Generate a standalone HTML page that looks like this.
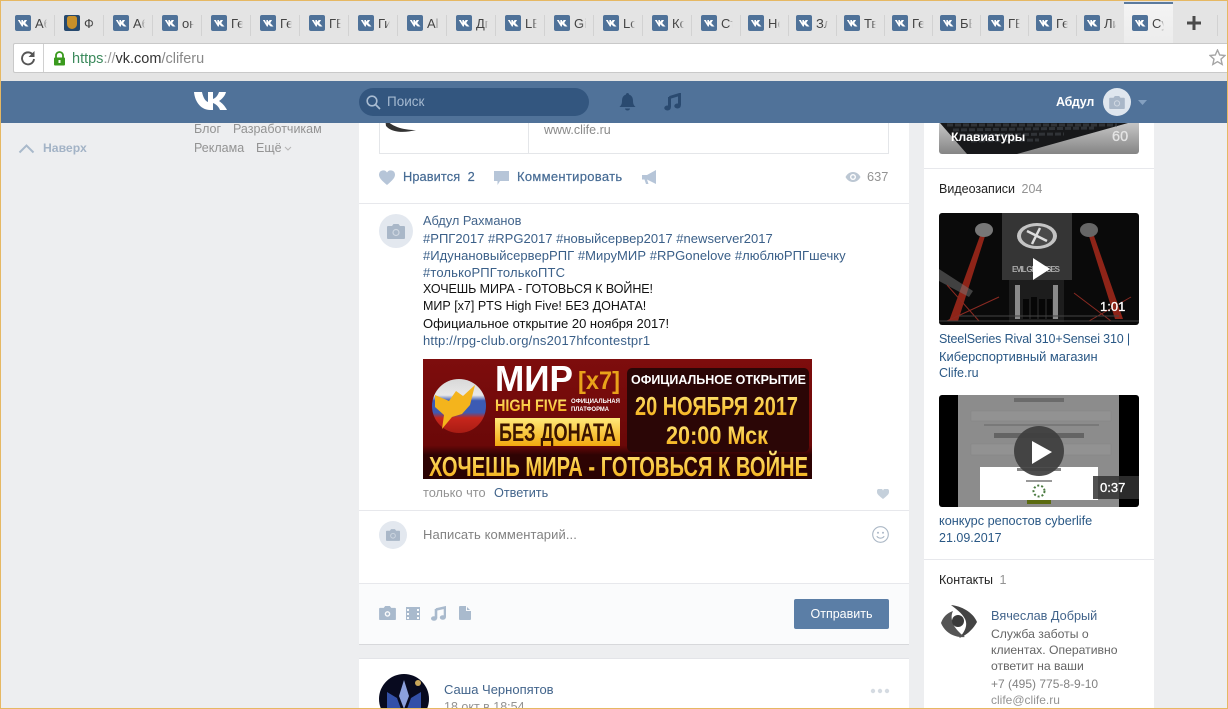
<!DOCTYPE html>
<html lang="ru"><head><meta charset="utf-8"><title>VK</title>
<style>
html,body{margin:0;padding:0;width:1228px;height:709px;overflow:hidden;background:#edeef0}
body{position:relative;font-family:"Liberation Sans","Noto Sans CJK SC",sans-serif;font-size:12.5px;color:#000}
.a{position:absolute;white-space:nowrap}
.b{position:absolute}
.i{position:absolute;top:15px;width:16px;height:16px;background:#4f7299;border-radius:2px;overflow:hidden}
.i:after{content:"";position:absolute;left:2.5px;top:4.5px;width:11px;height:7px;background:#fff;clip-path:polygon(0 0,20% 0,35% 50%,35% 0,50% 0,50% 33%,70% 0,90% 0,70% 50%,100% 100%,75% 100%,50% 67%,50% 100%,40% 100%)}
.t{position:absolute;top:16px;font-size:13px;line-height:16px;color:#444;width:12px;overflow:hidden;white-space:nowrap;-webkit-mask-image:linear-gradient(90deg,#000 65%,transparent);mask-image:linear-gradient(90deg,#000 65%,transparent)}
.s{position:absolute;top:15px;width:1px;height:21px;background:#d2d2d2}
.l{color:#3a5f88}
.g{color:#939393}
.n{color:#42648b;font-weight:normal}
.p{font-size:13px;line-height:17px;color:#111}
</style></head><body>

<!-- browser chrome -->
<div class="b" style="left:0;top:0;width:1228px;height:81px;background:#e4e4e4"></div>
<div class="b" style="left:1124px;top:2px;width:49px;height:41px;background:linear-gradient(#f4f4f4,#ececec);border-top:2px solid #5b7a9d;box-sizing:border-box"></div>

<div class="i" style="left:15px"></div><div class="t" style="left:35px">Аб</div><div class="s" style="left:54px"></div>
<div class="b" style="left:64px;top:15px;width:16px;height:16px;background:#26496e;border-radius:2px"><div class="b" style="left:3px;top:1px;width:10px;height:13px;background:#c8902a;border-radius:3px 3px 6px 6px"></div></div><div class="t" style="left:84px">Ф</div><div class="s" style="left:103px"></div>
<div class="i" style="left:113px"></div><div class="t" style="left:133px">Аб</div><div class="s" style="left:152px"></div>
<div class="i" style="left:162px"></div><div class="t" style="left:182px">он</div><div class="s" style="left:201px"></div>
<div class="i" style="left:211px"></div><div class="t" style="left:231px">Ге</div><div class="s" style="left:250px"></div>
<div class="i" style="left:260px"></div><div class="t" style="left:280px">Ге</div><div class="s" style="left:299px"></div>
<div class="i" style="left:309px"></div><div class="t" style="left:329px">ГЕ</div><div class="s" style="left:348px"></div>
<div class="i" style="left:358px"></div><div class="t" style="left:378px">Ги</div><div class="s" style="left:397px"></div>
<div class="i" style="left:407px"></div><div class="t" style="left:427px">Al</div><div class="s" style="left:446px"></div>
<div class="i" style="left:456px"></div><div class="t" style="left:476px">Дг</div><div class="s" style="left:495px"></div>
<div class="i" style="left:505px"></div><div class="t" style="left:525px">LE</div><div class="s" style="left:544px"></div>
<div class="i" style="left:554px"></div><div class="t" style="left:574px">Gi</div><div class="s" style="left:593px"></div>
<div class="i" style="left:603px"></div><div class="t" style="left:623px">Lc</div><div class="s" style="left:642px"></div>
<div class="i" style="left:652px"></div><div class="t" style="left:672px">Кс</div><div class="s" style="left:691px"></div>
<div class="i" style="left:701px"></div><div class="t" style="left:721px">Ст</div><div class="s" style="left:740px"></div>
<div class="i" style="left:748px"></div><div class="t" style="left:768px">Не</div><div class="s" style="left:788px"></div>
<div class="i" style="left:796px"></div><div class="t" style="left:816px">Зл</div><div class="s" style="left:836px"></div>
<div class="i" style="left:844px"></div><div class="t" style="left:864px">Тв</div><div class="s" style="left:884px"></div>
<div class="i" style="left:892px"></div><div class="t" style="left:912px">Ге</div><div class="s" style="left:932px"></div>
<div class="i" style="left:940px"></div><div class="t" style="left:960px">БЕ</div><div class="s" style="left:980px"></div>
<div class="i" style="left:988px"></div><div class="t" style="left:1008px">ГЕ</div><div class="s" style="left:1028px"></div>
<div class="i" style="left:1036px"></div><div class="t" style="left:1056px">Ге</div><div class="s" style="left:1076px"></div>
<div class="i" style="left:1084px"></div><div class="t" style="left:1104px">Ли</div>
<div class="i" style="left:1132px"></div><div class="t" style="left:1152px">Су</div>
<div class="s" style="left:1217px"></div>
<svg class="b" style="left:1187px;top:16px" width="14" height="14"><path d="M5.5 0h3v5.500H14v3H8.500V14h-3V8.500H0v-3h5.500z" fill="#4a4a4a"/></svg>

<!-- address bar -->
<div class="b" style="left:13px;top:43px;width:1215px;height:30px;background:#fff;border:1px solid #c9c9c9;border-right:0;border-radius:2px 0 0 2px;box-sizing:border-box"></div>
<div class="b" style="left:43px;top:44px;width:1px;height:28px;background:#d0d0d0"></div>
<svg class="b" style="left:20px;top:50px" width="16" height="16" viewBox="0 0 16 16"><path d="M13 5A6 6 0 1 0 14 9" fill="none" stroke="#555" stroke-width="1.900"/><path d="M14.500 1v6h-6z" fill="#555"/></svg>
<svg class="b" style="left:53px;top:51px" width="13" height="15" viewBox="0 0 13 15"><path d="M3 7V4.500a3.500 3.500 0 0 1 7 0V7" fill="none" stroke="#3a9a1e" stroke-width="1.800"/><rect x="1" y="6.500" width="11" height="8" rx="1" fill="#3a9a1e"/><rect x="5.500" y="9" width="2" height="3" fill="#fff"/></svg>
<div class="a" style="left:72px;top:51px;font-size:14.500px;line-height:17px"><span style="color:#3b8a5c">https</span><span style="color:#999">://</span><span style="color:#333">vk.com</span><span style="color:#888">/cliferu</span></div>
<svg class="b" style="left:1209px;top:49px" width="17" height="17" viewBox="0 0 17 17"><path d="M8.500 1l2.200 5 5.300.5-4 3.600 1.200 5.400-4.700-2.800-4.700 2.800 1.200-5.400-4-3.600 5.300-.5z" fill="none" stroke="#a5a5a5" stroke-width="1.400"/></svg>

<!-- left column -->
<svg class="b" style="left:18px;top:143px" width="17" height="11"><path d="M1.500 9.500L8.500 2.500l7 7" fill="none" stroke="#a9b9cb" stroke-width="2"/></svg>
<div class="a" style="left:43px;top:140px;font-weight:bold;font-size:12.200px;line-height:16px;color:#a3b3c6">Наверх</div>
<div class="a g" style="left:194px;top:121px;line-height:16px;color:#939393">Блог</div>
<div class="a g" style="left:233px;top:121px;line-height:16px;color:#939393">Разработчикам</div>
<div class="a g" style="left:194px;top:140px;line-height:16px;color:#939393">Реклама</div>
<div class="a g" style="left:256px;top:140px;line-height:16px;color:#939393">Ещё</div>
<svg class="b" style="left:284px;top:146px" width="8" height="6"><path d="M1 1l3 3 3-3" fill="none" stroke="#b5b5b5" stroke-width="1"/></svg>

<!-- main card -->
<div class="b" style="left:359px;top:100px;width:550px;height:544px;background:#fff;box-shadow:0 1px 0 #d7d8db"></div>

<!-- link preview -->
<div class="b" style="left:379px;top:100px;width:510px;height:54px;border:1px solid #e4e6e9;box-sizing:border-box"></div>
<div class="b" style="left:528px;top:100px;width:1px;height:54px;background:#e4e6e9"></div>
<svg class="b" style="left:380px;top:112px" width="50" height="22"><path d="M5 6C10 14 22 18 36 18 25 21 12 21 6 14z" fill="#333"/></svg>
<div class="a" style="left:544px;top:122px;line-height:16px;color:#8a8a8a">www.clife.ru</div>

<!-- actions -->
<svg class="b" style="left:378px;top:169px" width="18" height="17" viewBox="0 0 18 17"><path d="M9 16C3 11 1 8.500 1 5.500A4.300 4.300 0 0 1 9 3.500 4.300 4.300 0 0 1 17 5.500C17 8.500 15 11 9 16z" fill="#b6c5d8"/></svg>
<div class="a" style="left:403px;top:169px;font-size:12.800px;line-height:16px;color:#466b94;letter-spacing:.1px;-webkit-text-stroke:.2px #466b94">Нравится&nbsp; 2</div>
<svg class="b" style="left:494px;top:171px" width="16" height="15"><path d="M0 0h15v10H6l-2.500 4V10H0z" fill="#b6c5d8"/></svg>
<div class="a" style="left:517px;top:169px;font-size:13px;line-height:16px;color:#466b94;letter-spacing:.3px;-webkit-text-stroke:.2px #466b94">Комментировать</div>
<svg class="b" style="left:642px;top:170px" width="16" height="15"><path d="M0 5h5L14 0v14L5 9.500 6.500 14H4L2.500 9.500H0z" fill="#b6c5d8"/></svg>
<svg class="b" style="left:845px;top:171px" width="16" height="12" viewBox="0 0 16 12"><path d="M8 1C4 1 1.500 4 .5 6 1.500 8 4 11 8 11s6.500-3 7.500-5C14.500 4 12 1 8 1z" fill="#bcc7d3"/><circle cx="8" cy="6" r="3" fill="#fff"/><circle cx="8" cy="6" r="1.600" fill="#bcc7d3"/></svg>
<div class="a" style="left:867px;top:169px;font-size:12.800px;line-height:16px;color:#939393">637</div>
<div class="b" style="left:359px;top:203px;width:550px;height:1px;background:#e7e8ec"></div>

<!-- comment -->
<div class="b" style="left:379px;top:214px;width:34px;height:34px;border-radius:50%;background:#e3e8ef"></div>
<svg class="b" style="left:387px;top:224px" width="18" height="15" viewBox="0 0 18 15"><path d="M1 2h4l1.500-2h5L13 2h4a1 1 0 0 1 1 1v11a1 1 0 0 1-1 1H1a1 1 0 0 1-1-1V3a1 1 0 0 1 1-1z" fill="#a9b7c8"/><circle cx="9" cy="8.500" r="3" fill="none" stroke="#cfd7e1" stroke-width="1.200"/></svg>
<div class="a n" style="left:423px;top:212px;font-size:12.800px;line-height:17px">Абдул Рахманов</div>
<div class="a p" style="left:423px;top:230px;letter-spacing:.02px"><span class="l">#РПГ2017 #RPG2017 #новыйсервер2017 #newserver2017</span></div>
<div class="a p" style="left:423px;top:247px;letter-spacing:.05px"><span class="l">#ИдунановыйсерверРПГ #МируМИР #RPGonelove #люблюРПГшечку</span></div>
<div class="a p" style="left:423px;top:264px;letter-spacing:.15px"><span class="l">#толькоРПГтолькоПТС</span></div>
<div class="a p" style="left:423px;top:281px;font-size:12.500px;letter-spacing:-.07px">ХОЧЕШЬ МИРА - ГОТОВЬСЯ К ВОЙНЕ!</div>
<div class="a p" style="left:423px;top:298px;font-size:12.500px">МИР [x7] PTS High Five! БЕЗ ДОНАТА!</div>
<div class="a p" style="left:423px;top:315px">Официальное открытие 20 ноября 2017!</div>
<div class="a p" style="left:423px;top:332px;letter-spacing:.2px"><span class="l">http://rpg-club.org/ns2017hfcontestpr1</span></div>

<!-- banner -->
<svg class="b" style="left:423px;top:359px" width="389" height="120" viewBox="0 0 389 120">
<defs>
<linearGradient id="gy" x1="0" y1="0" x2="0" y2="1"><stop offset="0" stop-color="#ffe97a"/><stop offset="1" stop-color="#f3a90f"/></linearGradient>
<linearGradient id="sp" x1="0" y1="0" x2="0" y2="1"><stop offset="0" stop-color="#d8d8d8"/><stop offset=".3" stop-color="#e8e8e8"/><stop offset=".4" stop-color="#3c5bb4"/><stop offset=".62" stop-color="#3c5bb4"/><stop offset=".72" stop-color="#c8261c"/><stop offset="1" stop-color="#a81c14"/></linearGradient>
<linearGradient id="bg" x1="0" y1="0" x2="0" y2="1"><stop offset="0" stop-color="#7e0d0d"/><stop offset=".72" stop-color="#6a0808"/><stop offset=".8" stop-color="#2e0303"/><stop offset="1" stop-color="#2a0303"/></linearGradient>
</defs>
<rect width="389" height="120" fill="url(#bg)"/>
<rect x="204" y="9" width="182" height="84" rx="5" fill="#2b0606"/>
<circle cx="36" cy="47" r="27" fill="url(#sp)"/>
<path d="M12 36l14 6 7-10 7 5 12-11-5 20-8 9-10 3-10 12 2-14-9-8z" fill="#f4b41c"/>
<text x="72" y="32" font-family="Liberation Sans" font-weight="bold" font-size="36" fill="#fff" textLength="78" lengthAdjust="spacingAndGlyphs">МИР</text>
<text x="155" y="30" font-family="Liberation Sans" font-weight="bold" font-size="25" fill="#e9a21a" textLength="42" lengthAdjust="spacingAndGlyphs">[x7]</text>
<text x="72" y="52" font-family="Liberation Sans" font-weight="bold" font-size="17" fill="url(#gy)" textLength="72" lengthAdjust="spacingAndGlyphs">HIGH FIVE</text>
<text x="148" y="44" font-family="Liberation Sans" font-weight="bold" font-size="6" fill="#fff" textLength="49" lengthAdjust="spacingAndGlyphs">ОФИЦИАЛЬНАЯ</text>
<text x="148" y="52" font-family="Liberation Sans" font-weight="bold" font-size="6" fill="#fff" textLength="38" lengthAdjust="spacingAndGlyphs">ПЛАТФОРМА</text>
<rect x="72" y="59" width="125" height="28" fill="url(#gy)"/>
<text x="76" y="82" font-family="Liberation Sans" font-weight="bold" font-size="25" fill="#3b1400" textLength="117" lengthAdjust="spacingAndGlyphs">БЕЗ ДОНАТА</text>
<text x="208" y="25" font-family="Liberation Sans" font-weight="bold" font-size="12.500" fill="#fff" textLength="175" lengthAdjust="spacingAndGlyphs">ОФИЦИАЛЬНОЕ ОТКРЫТИЕ</text>
<text x="212" y="56" font-family="Liberation Sans" font-weight="bold" font-size="26" fill="url(#gy)" textLength="163" lengthAdjust="spacingAndGlyphs">20 НОЯБРЯ 2017</text>
<text x="243" y="85" font-family="Liberation Sans" font-weight="bold" font-size="25" fill="url(#gy)" textLength="102" lengthAdjust="spacingAndGlyphs">20:00 Мск</text>
<text x="6" y="117" font-family="Liberation Sans" font-weight="bold" font-size="28" fill="url(#gy)" textLength="379" lengthAdjust="spacingAndGlyphs">ХОЧЕШЬ МИРА - ГОТОВЬСЯ К ВОЙНЕ</text>
</svg>

<div class="a" style="left:423px;top:485px;font-size:12.800px;line-height:16px;color:#939393">только что</div>
<div class="a" style="left:494px;top:485px;font-size:12.700px;line-height:16px;color:#42648b">Ответить</div>
<svg class="b" style="left:877px;top:489px" width="12" height="10" viewBox="0 0 18 15"><path d="M9 15C3 10 0 8 0 4.500A4.300 4.300 0 0 1 9 2.500 4.300 4.300 0 0 1 18 4.500C18 8 15 10 9 15z" fill="#c5d0db"/></svg>
<div class="b" style="left:359px;top:510px;width:550px;height:1px;background:#e7e8ec"></div>

<div class="b" style="left:379px;top:521px;width:28px;height:28px;border-radius:50%;background:#e3e8ef"></div>
<svg class="b" style="left:386px;top:529px" width="14" height="12" viewBox="0 0 18 15"><path d="M1 2h4l1.500-2h5L13 2h4a1 1 0 0 1 1 1v11a1 1 0 0 1-1 1H1a1 1 0 0 1-1-1V3a1 1 0 0 1 1-1z" fill="#a9b7c8"/><circle cx="9" cy="8.500" r="3" fill="none" stroke="#cfd7e1" stroke-width="1.200"/></svg>
<div class="a" style="left:423px;top:527px;font-size:13px;letter-spacing:.1px;line-height:16px;color:#828282">Написать комментарий...</div>
<svg class="b" style="left:872px;top:526px" width="17" height="17" viewBox="0 0 17 17"><circle cx="8.500" cy="8.500" r="7.800" fill="none" stroke="#aab7c5" stroke-width="1.100"/><circle cx="6" cy="6.800" r="1" fill="#aab7c5"/><circle cx="11" cy="6.800" r="1" fill="#aab7c5"/><path d="M4.800 10.200c1.700 2.600 5.700 2.600 7.400 0" fill="none" stroke="#aab7c5" stroke-width="1.100"/></svg>

<div class="b" style="left:359px;top:583px;width:550px;height:61px;background:#fafbfc;border-top:1px solid #e7e8ec;box-sizing:border-box"></div>
<svg class="b" style="left:379px;top:606px" width="17" height="14" viewBox="0 0 18 15"><path d="M1 2h4l1.500-2h5L13 2h4a1 1 0 0 1 1 1v11a1 1 0 0 1-1 1H1a1 1 0 0 1-1-1V3a1 1 0 0 1 1-1z" fill="#a9bacd"/><circle cx="9" cy="8.500" r="3" fill="#fafbfc"/><circle cx="9" cy="8.500" r="1.500" fill="#a9bacd"/></svg>
<svg class="b" style="left:406px;top:606px" width="14" height="14"><path d="M0 1h14v13H0z" fill="#a9bacd"/><path d="M1 3h2v2H1zM1 7h2v2H1zM1 11h2v2H1zM11 3h2v2h-2zM11 7h2v2h-2zM11 11h2v2h-2z" fill="#fafbfc"/></svg>
<svg class="b" style="left:431px;top:606px" width="15" height="15"><path d="M5 3.500L14 1.500v10" fill="none" stroke="#a9bacd" stroke-width="2.600"/><path d="M5 3v9.500" fill="none" stroke="#a9bacd" stroke-width="2.600"/><ellipse cx="3" cy="12.500" rx="3" ry="2.300" fill="#a9bacd"/><ellipse cx="11.800" cy="11.500" rx="3" ry="2.300" fill="#a9bacd"/></svg>
<svg class="b" style="left:459px;top:606px" width="12" height="14"><path d="M0 1a1 1 0 0 1 1-1h6l5 5v8a1 1 0 0 1-1 1H1a1 1 0 0 1-1-1z" fill="#a9bacd"/><path d="M7.500 0v4.500H12" fill="none" stroke="#fafbfc"/></svg>
<div class="b" style="left:794px;top:599px;width:95px;height:30px;background:#5b7ea6;border-radius:2px;color:#fff;text-align:center;line-height:30px;font-size:12.500px">Отправить</div>

<!-- next card -->
<div class="b" style="left:359px;top:659px;width:550px;height:50px;background:#fff;box-shadow:0 -1px 0 #e3e4e8"></div>
<svg class="b" style="left:379px;top:674px" width="50" height="35"><circle cx="25" cy="25" r="25" fill="#080a1f"/><path d="M25 6l5 16-5 13-5-13z" fill="#8ca0dc"/><path d="M8 18l10 6 4 11H8z" fill="#3350a8"/><path d="M42 18l-10 6-4 11h14z" fill="#3350a8"/><circle cx="39" cy="9" r="3" fill="#c8a65a"/></svg>
<div class="a n" style="left:444px;top:682px;line-height:16px;font-size:13px">Саша Чернопятов</div>
<div class="a" style="left:444px;top:699px;line-height:16px;color:#939393">18 окт в 18:54</div>
<svg class="b" style="left:870px;top:688px" width="20" height="6"><circle cx="3" cy="3" r="2.200" fill="#d5dbe2"/><circle cx="10" cy="3" r="2.200" fill="#d5dbe2"/><circle cx="17" cy="3" r="2.200" fill="#d5dbe2"/></svg>

<!-- right card -->
<div class="b" style="left:924px;top:100px;width:230px;height:609px;background:#fff"></div>
<svg class="b" style="left:939px;top:110px" width="200" height="44" viewBox="0 0 200 44">
<defs><linearGradient id="kb" x1="0" y1="0" x2="0" y2="1"><stop offset="0" stop-color="#e0e0e0"/><stop offset="1" stop-color="#858585"/></linearGradient></defs>
<rect width="200" height="44" rx="3" fill="url(#kb)"/>
<path d="M0 0H195V13L189 13 78 44H28L1 13z" fill="#17181a"/>
<path d="M8 15H178M14 20L155 18M20 25L125 24M32 31L100 30" stroke="#303337" stroke-width="3" stroke-dasharray="6 2"/>
</svg>
<div class="a" style="left:951px;top:129px;font-weight:bold;font-size:12.300px;line-height:16px;color:#fff;letter-spacing:-.1px">Клавиатуры</div>
<div class="a" style="left:1112px;top:129px;font-size:14.500px;line-height:16px;color:#e4e4e4;-webkit-text-stroke:.3px #e4e4e4">60</div>
<div class="b" style="left:924px;top:168px;width:230px;height:1px;background:#e7e8ec"></div>

<div class="a" style="left:939px;top:181px;line-height:16px;color:#222">Видеозаписи <span style="color:#939393;margin-left:3px">204</span></div>

<!-- video 1 -->
<svg class="b" style="left:939px;top:213px" width="200" height="112" viewBox="0 0 200 112">
<rect width="200" height="112" rx="3" fill="#0a0a0a"/>
<path d="M63 0H133V67H63z" fill="#353535"/>
<path d="M70 67h55v42H70z" fill="#1d1d1d"/>
<path d="M10 108L42 20 47 20 19 108z" fill="#8e2418"/>
<path d="M154 20L184 106 176 106 149 20z" fill="#8e2418"/>
<path d="M0 56L34 78 30 84 0 68z" fill="#777" opacity=".5"/>
<path d="M8 108L60 84M40 108L8 72M150 108L192 84M172 108L135 80" stroke="#8a2a22" stroke-width="1"/>
<ellipse cx="45" cy="17" rx="9" ry="7" fill="#777"/><ellipse cx="150" cy="17" rx="9" ry="7" fill="#666"/>
<ellipse cx="98" cy="23" rx="20" ry="13" fill="#c4c4c4"/><ellipse cx="98" cy="23" rx="16" ry="10" fill="#4a4a4a"/>
<path d="M88 18L108 28M101 15L93 31" stroke="#ddd" stroke-width="2.500"/>
<text x="73" y="59" font-family="Liberation Sans" font-weight="bold" font-size="8" fill="#aaa" textLength="48">EVIL GENIUSES</text>
<path d="M76 72h5v34h-5zM114 72h5v34h-5z" fill="#8a8a8a"/>
<path d="M84 86h6v20h-6zM92 84h6v22h-6zM100 86h6v20h-6zM108 86h5v20h-5z" fill="#070707"/>
<path d="M0 108H200M20 103H180" stroke="#444" stroke-width="1"/>
<path d="M94 45L111 56 94 67z" fill="#fff"/>
<text x="161" y="98" font-family="Liberation Sans" font-size="13" fill="#fff" stroke="#fff" stroke-width=".3">1:01</text>
</svg>
<div class="a" style="left:939px;top:331px;line-height:17px;color:#2a5885;letter-spacing:-.15px">SteelSeries Rival 310+Sensei 310 |</div>
<div class="a" style="left:939px;top:348px;font-size:12.900px;line-height:17px;color:#2a5885">Киберспортивный магазин</div>
<div class="a" style="left:939px;top:365px;line-height:17px;color:#2a5885">Clife.ru</div>

<!-- video 2 -->
<svg class="b" style="left:939px;top:395px" width="200" height="112" viewBox="0 0 200 112">
<rect width="200" height="112" rx="3" fill="#000"/>
<rect x="19" width="161" height="112" fill="#8c8c8c"/>
<rect x="75" y="3" width="50" height="4" fill="#555" opacity=".6"/>
<rect x="32" y="16" width="140" height="10" fill="#929292" stroke="#858585" stroke-width=".5"/>
<rect x="45" y="29" width="115" height="2" fill="#666" opacity=".5"/>
<rect x="55" y="38" width="90" height="5" fill="#444" opacity=".55"/>
<rect x="32" y="49" width="140" height="11" fill="#929292" stroke="#858585" stroke-width=".5"/>
<rect x="41" y="72" width="118" height="33" fill="#fff"/>
<rect x="78" y="73" width="44" height="3" fill="#888"/>
<rect x="87" y="85" width="26" height="2" fill="#999"/>
<circle cx="100" cy="96" r="5.500" fill="none" stroke="#4a7a40" stroke-width="2" stroke-dasharray="2 2"/>
<rect x="88" y="105" width="24" height="4" fill="#5a6a10"/>
<circle cx="100" cy="56" r="25" fill="#3e3e3e" opacity=".92"/>
<path d="M93 46L113 57 93 69z" fill="#fff"/>
<rect x="154" y="81" width="46" height="23" fill="#333" opacity=".85"/>
<text x="161" y="97" font-family="Liberation Sans" font-size="13" fill="#fff" stroke="#fff" stroke-width=".3">0:37</text>
</svg>
<div class="a" style="left:939px;top:513px;font-size:12.700px;line-height:17px;color:#2a5885">конкурс репостов cyberlife</div>
<div class="a" style="left:939px;top:530px;line-height:17px;color:#2a5885">21.09.2017</div>
<div class="b" style="left:924px;top:559px;width:230px;height:1px;background:#e7e8ec"></div>

<div class="a" style="left:939px;top:572px;line-height:16px;color:#222">Контакты <span style="color:#939393;margin-left:3px">1</span></div>
<svg class="b" style="left:941px;top:605px" width="36" height="34" viewBox="0 0 36 34"><path d="M10 0C20 1 32 7 36 17 31 26 24 31 18 33 24 27 27 20 24 14 21 8 15 4 10 0z" fill="#444"/><path d="M0 18C2 12 6 8 12 6 9 12 10 22 24 32 14 33 4 28 0 18z" fill="#555"/><circle cx="17" cy="16" r="6" fill="#3a3a3a"/></svg>
<div class="a" style="left:991px;top:608px;font-size:12.700px;line-height:16px;color:#42648b">Вячеслав Добрый</div>
<div class="a" style="left:991px;top:626px;line-height:16px;color:#656565;font-size:12.200px">Служба заботы о</div>
<div class="a" style="left:991px;top:642px;line-height:16px;color:#656565;font-size:12.200px">клиентах. Оперативно</div>
<div class="a" style="left:991px;top:658px;line-height:16px;color:#656565;font-size:12.200px">ответит на ваши</div>
<div class="a" style="left:991px;top:676px;line-height:16px;color:#828282;font-size:12px">+7 (495) 775-8-9-10</div>
<div class="a" style="left:991px;top:692px;line-height:16px;color:#939393;font-size:12px">clife@clife.ru</div>

<!-- vk header -->
<div class="b" style="left:0;top:81px;width:1228px;height:42px;background:#507299"></div>
<svg class="b" style="left:194px;top:91px" width="33" height="20" viewBox="0 0 33 20"><path d="M0 1h8c1 5 3 9 6 10V1h5v7c3-1 5-4 6-7h7c-1 4-4 7-7 9 3 2 6 5 8 9h-7c-1-3-4-6-7-7v7h-3C8 19 1 12 0 1z" fill="#fff"/></svg>
<div class="b" style="left:359px;top:88px;width:230px;height:28px;border-radius:14px;background:#33567f"></div>
<svg class="b" style="left:366px;top:95px" width="15" height="15"><circle cx="6" cy="6" r="4.800" fill="none" stroke="#a9bcd2" stroke-width="1.600"/><path d="M9.500 9.500L14 14" stroke="#a9bcd2" stroke-width="1.800"/></svg>
<div class="a" style="left:387px;top:94px;font-size:13.500px;line-height:16px;color:#a5b9d0">Поиск</div>
<svg class="b" style="left:619px;top:93px" width="17" height="18" viewBox="0 0 17 18"><path d="M8.500 0c1 0 1.500.7 1.500 1.500C13 2.500 14 5 14 8c0 3 1 4.500 2.500 6H.5C2 12.500 3 11 3 8c0-3 1-5.500 4-6.500C7 .7 7.500 0 8.500 0z" fill="#2a4a70"/><path d="M6 15.500h5a2.500 2 0 0 1-5 0z" fill="#2a4a70"/></svg>
<svg class="b" style="left:664px;top:93px" width="17" height="18" viewBox="0 0 17 18"><path d="M5.500 4.500L15.500 1.500v11" fill="none" stroke="#2a4a70" stroke-width="3"/><path d="M5.500 4v10.500" fill="none" stroke="#2a4a70" stroke-width="3"/><ellipse cx="3.500" cy="15" rx="3.200" ry="2.500" fill="#2a4a70"/><ellipse cx="13.500" cy="13" rx="3.200" ry="2.500" fill="#2a4a70"/></svg>
<div class="a" style="left:1056px;top:94px;font-weight:bold;font-size:12.500px;line-height:16px;color:#fff;letter-spacing:-.2px">Абдул</div>
<div class="b" style="left:1103px;top:88px;width:28px;height:28px;border-radius:50%;background:#dfe6ee"></div>
<svg class="b" style="left:1109px;top:96px" width="16" height="13" viewBox="0 0 18 15"><path d="M1 2h4l1.500-2h5L13 2h4a1 1 0 0 1 1 1v11a1 1 0 0 1-1 1H1a1 1 0 0 1-1-1V3a1 1 0 0 1 1-1z" fill="#a9b7c8"/><circle cx="9" cy="8.500" r="3" fill="none" stroke="#cfd7e1" stroke-width="1.200"/></svg>
<svg class="b" style="left:1138px;top:100px" width="9" height="5"><path d="M0 0h9L4.500 5z" fill="#84a0c0"/></svg>

<!-- window border -->
<div class="b" style="left:0;top:0;width:1228px;height:709px;border:1px solid #e6b863;box-sizing:border-box"></div>
</body></html>
